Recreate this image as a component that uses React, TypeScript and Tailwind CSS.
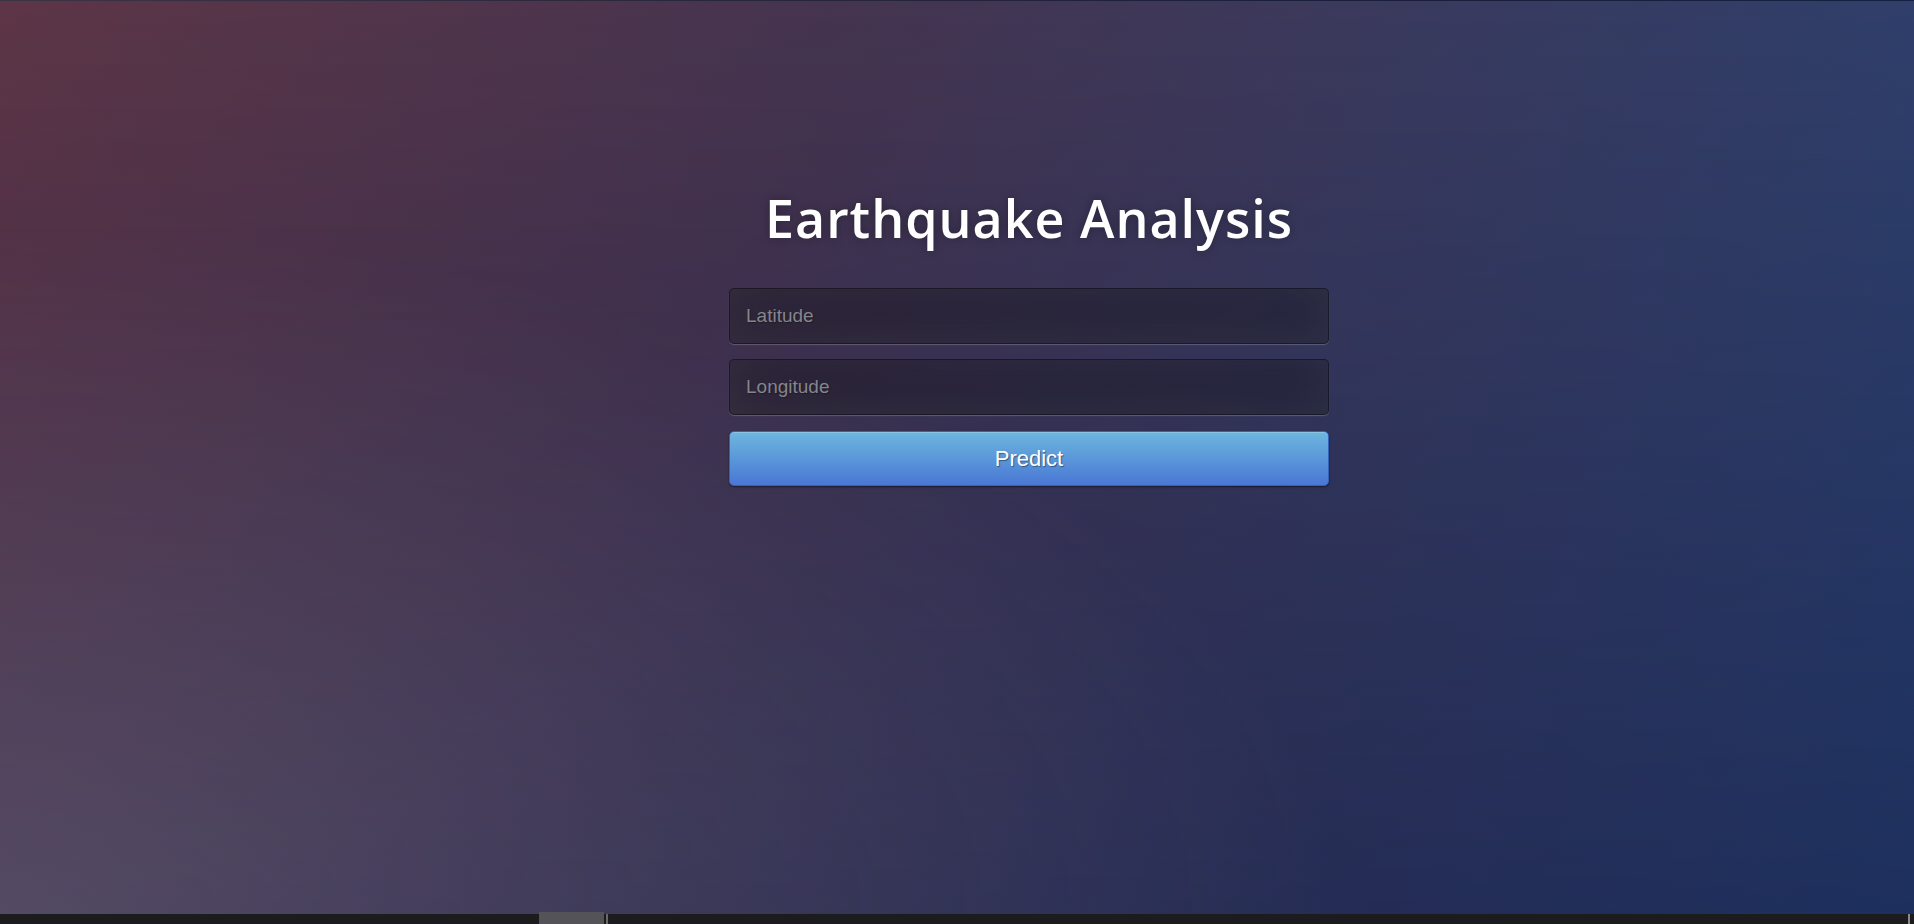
export default function App() {
  return (
    <div className="h-[924px] w-full overflow-hidden flex flex-col bg-[#2e3350]">
      <main
        className="relative flex-1 border-t border-black/30 flex justify-center pl-[144px] pt-[191px]"
        style={{
          background:
            "radial-gradient(ellipse 70% 75% at 0% 100%, rgba(150,150,165,0.3) 0%, rgba(150,150,165,0) 100%), linear-gradient(to bottom, rgba(10,25,70,0) 0%, rgba(10,25,70,0.42) 100%), linear-gradient(100deg, #5d3546 0%, #45344f 40%, #2c406e 100%)",
        }}
      >
        <div className="w-[600px] flex flex-col">
          <h1 className="text-center text-white text-[52px] leading-none font-semibold tracking-[1px] font-['Open_Sans',sans-serif] [text-shadow:0_0_10px_rgba(0,0,0,0.3)]">
            Earthquake Analysis
          </h1>
          <input
            type="text"
            placeholder="Latitude"
            className="mt-[44px] h-[56px] w-full rounded-[5px] border border-black/30 bg-black/30 px-4 text-[19px] text-white placeholder:text-[#85858c] font-['Liberation_Sans',Arial,sans-serif] outline-none shadow-[inset_0_-5px_45px_rgba(100,100,100,0.2),0_1px_1px_rgba(255,255,255,0.2)] [text-shadow:1px_1px_1px_rgba(0,0,0,0.3)]"
          />
          <input
            type="text"
            placeholder="Longitude"
            className="mt-[15px] h-[56px] w-full rounded-[5px] border border-black/30 bg-black/30 px-4 text-[19px] text-white placeholder:text-[#85858c] font-['Liberation_Sans',Arial,sans-serif] outline-none shadow-[inset_0_-5px_45px_rgba(100,100,100,0.2),0_1px_1px_rgba(255,255,255,0.2)] [text-shadow:1px_1px_1px_rgba(0,0,0,0.3)]"
          />
          <button className="mt-[16px] h-[55px] w-full rounded-[5px] border border-[#3762bc] bg-gradient-to-b from-[#6eb6de] to-[#4a77d4] text-white text-[22px] font-['Liberation_Sans',Arial,sans-serif] shadow-[inset_0_1px_0_rgba(255,255,255,0.2),0_1px_2px_rgba(0,0,0,0.5)] [text-shadow:1px_1px_1px_rgba(0,0,0,0.4)]">
            Predict
          </button>
        </div>
      </main>
      <div className="relative h-[10px] shrink-0 bg-[#1c1c1e] flex">
        <div className="ml-[539px] w-[65px] h-[12px] -mt-[2px] bg-[#545458]" />
        <div className="ml-[2px] w-[2px] h-full bg-[#6a6a6e]" />
        <div className="ml-auto mr-[4px] w-[2px] h-full bg-[#8a8a8e]" />
      </div>
    </div>
  );
}
